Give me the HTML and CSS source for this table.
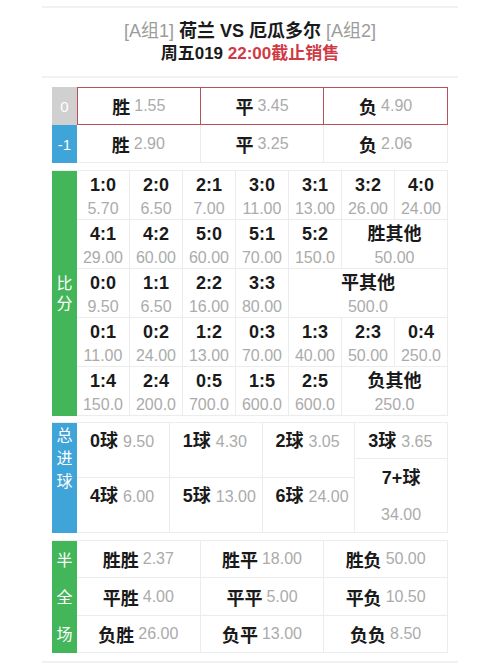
FILE: index.html
```html
<!DOCTYPE html>
<html lang="zh">
<head>
<meta charset="utf-8">
<link rel="stylesheet" href="styles.css">
</head>
<body>
<div class="page">
  <header class="head">
    <div class="title"><span class="grp">[A组1]</span> 荷兰 VS 厄瓜多尔 <span class="grp">[A组2]</span></div>
    <div class="sub">周五019 <span class="red">22:00截止销售</span></div>
  </header>

  <section class="hrow r0">
    <div class="lab gray">0</div>
    <div class="hc">胜 <span class="o">1.55</span></div>
    <div class="hc">平 <span class="o">3.45</span></div>
    <div class="hc">负 <span class="o">4.90</span></div>
  </section>
  <section class="hrow r1">
    <div class="lab blue">-1</div>
    <div class="hc">胜 <span class="o">2.90</span></div>
    <div class="hc">平 <span class="o">3.25</span></div>
    <div class="hc">负 <span class="o">2.06</span></div>
  </section>

  <section class="score">
    <div class="lab green vlab"><span>比</span><span>分</span></div>
    <div class="sc"><b>1:0</b><i>5.70</i></div>
    <div class="sc"><b>2:0</b><i>6.50</i></div>
    <div class="sc"><b>2:1</b><i>7.00</i></div>
    <div class="sc"><b>3:0</b><i>11.00</i></div>
    <div class="sc"><b>3:1</b><i>13.00</i></div>
    <div class="sc"><b>3:2</b><i>26.00</i></div>
    <div class="sc"><b>4:0</b><i>24.00</i></div>

    <div class="sc"><b>4:1</b><i>29.00</i></div>
    <div class="sc"><b>4:2</b><i>60.00</i></div>
    <div class="sc"><b>5:0</b><i>60.00</i></div>
    <div class="sc"><b>5:1</b><i>70.00</i></div>
    <div class="sc"><b>5:2</b><i>150.0</i></div>
    <div class="sc s2"><b>胜其他</b><i>50.00</i></div>

    <div class="sc"><b>0:0</b><i>9.50</i></div>
    <div class="sc"><b>1:1</b><i>6.50</i></div>
    <div class="sc"><b>2:2</b><i>16.00</i></div>
    <div class="sc"><b>3:3</b><i>80.00</i></div>
    <div class="sc s3"><b>平其他</b><i>500.0</i></div>

    <div class="sc"><b>0:1</b><i>11.00</i></div>
    <div class="sc"><b>0:2</b><i>24.00</i></div>
    <div class="sc"><b>1:2</b><i>13.00</i></div>
    <div class="sc"><b>0:3</b><i>70.00</i></div>
    <div class="sc"><b>1:3</b><i>40.00</i></div>
    <div class="sc"><b>2:3</b><i>50.00</i></div>
    <div class="sc"><b>0:4</b><i>250.0</i></div>

    <div class="sc"><b>1:4</b><i>150.0</i></div>
    <div class="sc"><b>2:4</b><i>200.0</i></div>
    <div class="sc"><b>0:5</b><i>700.0</i></div>
    <div class="sc"><b>1:5</b><i>600.0</i></div>
    <div class="sc"><b>2:5</b><i>600.0</i></div>
    <div class="sc s2"><b>负其他</b><i>250.0</i></div>
  </section>

  <section class="goals">
    <div class="lab blue tlab"><span>总</span><span>进</span><span>球</span></div>
    <div class="gc g0">0球 <span class="o">9.50</span></div>
    <div class="gc g1">1球 <span class="o">4.30</span></div>
    <div class="gc g2">2球 <span class="o">3.05</span></div>
    <div class="gc g3">3球 <span class="o">3.65</span></div>
    <div class="gc g4">4球 <span class="o">6.00</span></div>
    <div class="gc g5">5球 <span class="o">13.00</span></div>
    <div class="gc g6">6球 <span class="o">24.00</span></div>
    <div class="gc g7"><span class="l1">7+球</span><span class="o l2">34.00</span></div>
  </section>

  <section class="half">
    <div class="lab green hlab"><span>半</span><span>全</span><span>场</span></div>
    <div class="hf">胜胜 <span class="o">2.37</span></div>
    <div class="hf">胜平 <span class="o">18.00</span></div>
    <div class="hf">胜负 <span class="o">50.00</span></div>
    <div class="hf">平胜 <span class="o">4.00</span></div>
    <div class="hf">平平 <span class="o">5.00</span></div>
    <div class="hf">平负 <span class="o">10.50</span></div>
    <div class="hf">负胜 <span class="o">26.00</span></div>
    <div class="hf">负平 <span class="o">13.00</span></div>
    <div class="hf">负负 <span class="o">8.50</span></div>
  </section>

  <div class="foot"></div>
</div>
</body>
</html>
```

FILE: styles.css
```css
* { box-sizing: border-box; }
html, body { margin: 0; padding: 0; background: #fff; }
body {
  font-family: "Liberation Sans", "Noto Sans CJK SC", sans-serif;
  color: #1a1a1a;
}
.page { width: 500px; padding-top: 6px; }

.head {
  width: 416px;
  margin: 0 auto;
  border-top: 2px solid #f1f1f1;
  border-bottom: 2px solid #f1f1f1;
  padding: 11px 0 11px;
  text-align: center;
}
.title { font-size: 18px; line-height: 24px; font-weight: 700; }
.title .grp { color: #9c9c9c; font-weight: 400; }
.sub { font-size: 17px; line-height: 22px; font-weight: 700; }
.sub .red { color: #cf3b44; }

.o { color: #ababab; font-weight: 400; font-size: 16px; }

.lab {
  color: #fff;
  font-size: 15px;
  display: flex;
  align-items: center;
  justify-content: center;
}
.gray { background: #d0d0d0; }
.blue { background: #3fa4d8; }
.green { background: #43b65a; }

.hrow {
  display: grid;
  grid-template-columns: 25px repeat(3, 1fr);
  width: 396px;
  height: 38px;
  margin-left: 52px;
}
.r0 { margin-top: 9px; }
.hc {
  display: flex;
  align-items: center;
  justify-content: center;
  font-size: 18px;
  font-weight: 700;
  gap: 4px;
}
.r0 .hc { border: 1px solid #b7505a; border-left: none; }
.r0 .hc:nth-child(2) { border-left: 1px solid #b7505a; }
.r1 .hc { border-right: 1px solid #ececec; border-bottom: 1px solid #ececec; }

.score {
  display: grid;
  grid-template-columns: 25px repeat(7, 53px);
  grid-template-rows: repeat(5, 49px);
  width: 396px;
  margin: 7px 0 0 52px;
  border-top: 1px solid #ececec;
}
.score .lab { grid-row: 1 / 6; grid-column: 1; }
.vlab, .tlab, .hlab { flex-direction: column; font-size: 16px; }
.vlab span { line-height: 20px; }
.sc {
  display: flex;
  flex-direction: column;
  align-items: center;
  border-right: 1px solid #ececec;
  border-bottom: 1px solid #ececec;
}
.sc b { font-size: 18px; line-height: 26px; font-weight: 700; padding-top: 1px; }
.sc i { font-style: normal; font-size: 16px; line-height: 21px; color: #ababab; }
.s2 { grid-column: span 2; }
.s3 { grid-column: span 3; }

.goals {
  display: grid;
  grid-template-columns: 25px repeat(4, 1fr);
  grid-template-rows: 36px 19px 55px;
  width: 396px;
  margin: 6px 0 0 52px;
  border-top: 1px solid #ececec;
}
.goals .lab { grid-row: 1 / 4; grid-column: 1; justify-content: flex-start; padding-top: 1px; }
.tlab span { line-height: 23px; }
.gc {
  font-size: 18px;
  font-weight: 700;
  line-height: 36px;
  padding-left: 13px;
  border-right: 1px solid #ececec;
  border-bottom: 1px solid #ececec;
  white-space: nowrap;
}
.g0 { grid-column: 2; grid-row: 1 / 3; }
.g1 { grid-column: 3; grid-row: 1 / 3; }
.g2 { grid-column: 4; grid-row: 1 / 3; }
.g3 { grid-column: 5; grid-row: 1; }
.g4 { grid-column: 2; grid-row: 3; }
.g5 { grid-column: 3; grid-row: 3; }
.g6 { grid-column: 4; grid-row: 3; }
.g7 {
  grid-column: 5; grid-row: 2 / 4;
  display: flex; flex-direction: column; align-items: center;
  padding-left: 0;
}
.g7 .l1 { line-height: 38px; }
.g7 .l2 { line-height: 36px; }

.half {
  display: grid;
  grid-template-columns: 25px repeat(3, 1fr);
  grid-template-rows: 37px 38px 37px;
  width: 396px;
  margin: 7px 0 0 52px;
  border-top: 1px solid #ececec;
}
.half .lab { grid-row: 1 / 4; grid-column: 1; }
.hlab span { line-height: 37px; }
.hf {
  display: flex;
  align-items: center;
  justify-content: center;
  gap: 4px;
  font-size: 18px;
  font-weight: 700;
  border-right: 1px solid #ececec;
  border-bottom: 1px solid #ececec;
}

.foot {
  width: 416px;
  margin: 8px auto 0;
  border-top: 2px solid #f1f1f1;
}
```
